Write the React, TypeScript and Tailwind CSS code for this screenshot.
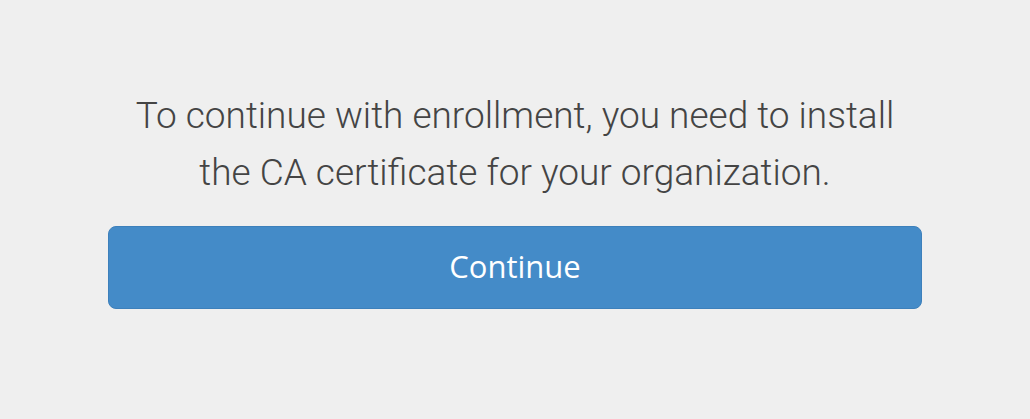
export default function App() {
  return (
    <div className="w-[1030px] h-[419px] bg-[#efefef] flex flex-col items-center font-['Roboto','Liberation_Sans',sans-serif]">
      <p className="mt-[87px] w-[840px] text-center text-[37px] leading-[57px] font-light text-[#444444]">
        To continue with enrollment, you need to install
        <br />
        the CA certificate for your organization.
      </p>
      <button className="mt-[25px] w-[814px] h-[83px] pb-[3px] rounded-[8px] bg-[#448bc8] border border-[#3d80bb] text-white text-[31px] font-['Open_Sans','Liberation_Sans',sans-serif]">
        Continue
      </button>
    </div>
  );
}
